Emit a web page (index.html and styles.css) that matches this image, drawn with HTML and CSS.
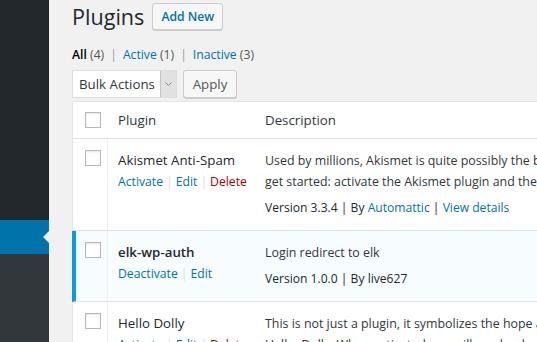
FILE: index.html
```html
<!DOCTYPE html>
<html lang="en">
<head>
    <meta charset="UTF-8">
    <title>Plugins</title>
    <link rel="stylesheet" href="styles.css">
</head>
<body>
    <div class="sidebar">
        <div class="menu-top"></div>
        <div class="menu-current"></div>
        <div class="submenu"></div>
    </div>

    <div class="wrap">
        <div class="page-header">
            <h1>Plugins</h1>
            <a class="btn add-new" href="#">Add New</a>
        </div>

        <ul class="subsubsub">
            <li><strong>All</strong> <span class="count">(4)</span></li>
            <li class="sep">|</li>
            <li><a href="#">Active <span class="count">(1)</span></a></li>
            <li class="sep">|</li>
            <li><a href="#">Inactive <span class="count">(3)</span></a></li>
        </ul>

        <div class="tablenav">
            <div class="select">
                <span class="select-label">Bulk Actions</span>
                <span class="select-arrow">
                    <svg width="7" height="4" viewBox="0 0 7 4"><path d="M0.5 0.5 L3.5 3.5 L6.5 0.5" fill="none" stroke="#888" stroke-width="1"/></svg>
                </span>
            </div>
            <button class="btn apply">Apply</button>
        </div>

        <div class="plugins">
            <div class="row head">
                <div class="check"><span class="box"></span></div>
                <div class="col-name">Plugin</div>
                <div class="col-desc">Description</div>
            </div>

            <div class="row">
                <div class="check"><span class="box"></span></div>
                <div class="col-name">
                    <div class="title">Akismet Anti-Spam</div>
                    <div class="actions">
                        <a href="#">Activate</a><span class="bar">|</span><a href="#">Edit</a><span class="bar">|</span><a href="#" class="delete">Delete</a>
                    </div>
                </div>
                <div class="col-desc">
                    <p>Used by millions, Akismet is quite possibly the best way in the world to protect your blog from spam. It keeps your site protected even while you sleep. To<br>get started: activate the Akismet plugin and then go to your Akismet Settings page to set up your API key.</p>
                    <div class="version">Version 3.3.4 | By <a href="#">Automattic</a> <span class="pipe">|</span> <a href="#">View details</a></div>
                </div>
            </div>

            <div class="row active">
                <div class="check"><span class="box"></span></div>
                <div class="col-name">
                    <div class="title">elk-wp-auth</div>
                    <div class="actions">
                        <a href="#">Deactivate</a><span class="bar">|</span><a href="#">Edit</a>
                    </div>
                </div>
                <div class="col-desc">
                    <p>Login redirect to elk</p>
                    <div class="version">Version 1.0.0 | By live627</div>
                </div>
            </div>

            <div class="row">
                <div class="check"><span class="box"></span></div>
                <div class="col-name">
                    <div class="title">Hello Dolly</div>
                    <div class="actions">
                        <a href="#">Activate</a><span class="bar">|</span><a href="#">Edit</a><span class="bar">|</span><a href="#" class="delete">Delete</a>
                    </div>
                </div>
                <div class="col-desc">
                    <p>This is not just a plugin, it symbolizes the hope and enthusiasm of an entire generation summed up in two words sung most famously by Louis Armstrong:<br>Hello, Dolly. When activated you will randomly see a lyric from Hello, Dolly in the upper right of your admin screen on every page.</p>
                </div>
            </div>
        </div>
    </div>
</body>
</html>
```

FILE: styles.css
```css
* {
    margin: 0;
    padding: 0;
    box-sizing: border-box;
}

body {
    width: 537px;
    height: 342px;
    overflow: hidden;
    display: flex;
    background: #f1f1f1;
    color: #32373c;
    font-family: 'Open Sans', sans-serif;
    font-size: 12.4px;
}

a {
    color: #0073aa;
    text-decoration: none;
}

/* admin menu */
.sidebar {
    width: 49px;
    flex-shrink: 0;
    display: flex;
    flex-direction: column;
}

.menu-top {
    height: 220px;
    background: #23282d;
}

.menu-current {
    height: 34px;
    background: #0073aa;
    position: relative;
}

.menu-current::after {
    content: '';
    position: absolute;
    right: 0;
    top: 50%;
    margin-top: -6px;
    border: 6px solid transparent;
    border-right-color: #f1f1f1;
    border-left-width: 0;
}

.submenu {
    flex: 1;
    background: #32373c;
}

/* content */
.wrap {
    flex: 1;
    min-width: 0;
    padding-left: 23px;
}

.page-header {
    display: flex;
    align-items: center;
    gap: 8px;
    height: 33px;
}

h1 {
    font-size: 21.6px;
    font-weight: 400;
    color: #23282d;
}

.btn {
    display: inline-flex;
    align-items: center;
    background: #f7f7f7;
    border: 1px solid #ccc;
    border-radius: 3px;
    box-shadow: 0 1px 0 #ccc;
    font-family: inherit;
}

.add-new {
    height: 27px;
    padding: 0 8px;
    font-size: 12.2px;
    font-weight: 600;
    color: #0073aa;
}

.subsubsub {
    list-style: none;
    display: flex;
    gap: 6px;
    margin-top: 12px;
    line-height: 20px;
    font-size: 12.2px;
    color: #555;
}

.subsubsub strong {
    color: #000;
    font-weight: 600;
}

.subsubsub .count {
    color: #555;
}

.sep {
    color: #999;
}

.tablenav {
    display: flex;
    gap: 6px;
    margin-top: 5px;
    height: 28px;
}

.select {
    display: flex;
    width: 105px;
    background: #fff;
    border: 1px solid #ddd;
}

.select-label {
    flex: 1;
    padding-left: 6px;
    font-size: 13.3px;
    line-height: 26px;
    color: #32373c;
}

.select-arrow {
    width: 16px;
    display: flex;
    align-items: center;
    justify-content: center;
    background: #e1e1e1;
    border-left: 1px solid #c4c4c4;
}

.apply {
    width: 54px;
    justify-content: center;
    font-size: 13.3px;
    color: #555;
}

/* plugins table */
.plugins {
    margin-top: 3px;
    width: 640px;
    background: #fff;
    border: 1px solid #e5e5e5;
    border-left: 0;
    box-shadow: 0 1px 1px rgba(0, 0, 0, 0.04);
}

.row {
    display: grid;
    grid-template-columns: 35px 147px 1fr;
    border-left: 1px solid #e5e5e5;
    border-bottom: 1px solid #e1e1e1;
    line-height: 21px;
}

.row.active {
    grid-template-columns: 32px 147px 1fr;
    border-left: 4px solid #00a0d2;
    background: #f7fcfe;
}

.check {
    padding: 11px 0 0 12px;
    border-right: 1px solid #f0f0f0;
}

.row.active .check {
    padding-left: 9px;
}

.box {
    display: block;
    width: 16px;
    height: 16px;
    background: #fff;
    border: 1px solid #b4b9be;
    box-shadow: inset 0 1px 2px rgba(0, 0, 0, 0.1);
}

.row.head {
    height: 37px;
    align-items: center;
    font-size: 13.3px;
}

.row.head .check {
    padding-top: 0;
    border-right-color: transparent;
}

.col-name {
    padding: 11px 10px 12px;
}

.col-desc {
    padding: 11px 10px 12px;
    white-space: nowrap;
}

.row.head .col-name,
.row.head .col-desc {
    padding-top: 0;
    padding-bottom: 0;
}

.title {
    font-size: 13.3px;
    color: #23282d;
}

.row.active .title {
    font-weight: 600;
}

.actions {
    font-size: 12.2px;
    color: #ddd;
}

.bar {
    margin: 0 3px;
}

.delete {
    color: #a00;
}

.version {
    margin-top: 5px;
    font-size: 12.1px;
    color: #23282d;
}

.pipe {
    color: #23282d;
}
```
